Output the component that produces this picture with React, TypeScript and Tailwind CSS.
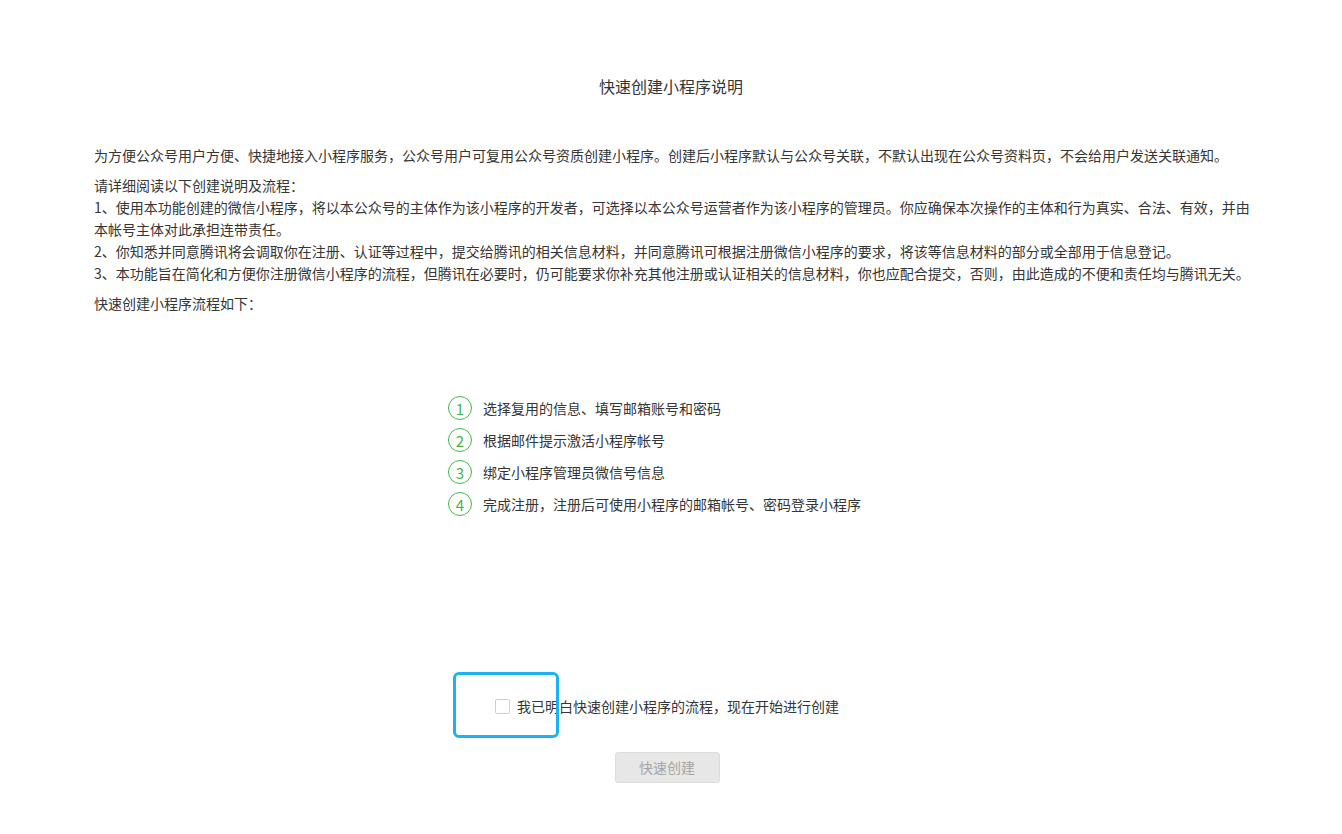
import React, { useState } from 'react';

const steps = [
  '选择复用的信息、填写邮箱账号和密码',
  '根据邮件提示激活小程序帐号',
  '绑定小程序管理员微信号信息',
  '完成注册，注册后可使用小程序的邮箱帐号、密码登录小程序',
];

const App = () => {
  const [agreed, setAgreed] = useState(false);

  return (
    <div className="min-h-screen bg-white text-[#353535] font-['Noto_Sans_CJK_SC','Noto_Sans',sans-serif]">
      <div className="pt-[74px] pb-[48px]">
        {/* Title */}
        <h2 className="text-center text-[16px] leading-[24px] font-normal">快速创建小程序说明</h2>

        {/* Intro */}
        <div className="ml-[94px] w-[1162px] mt-[46px] text-[14px] leading-[22px]">
          <p>
            为方便公众号用户方便、快捷地接入小程序服务，公众号用户可复用公众号资质创建小程序。创建后小程序默认与公众号关联，不默认出现在公众号资料页，不会给用户发送关联通知。
          </p>
          <p className="mt-[8px]">请详细阅读以下创建说明及流程：</p>
          <p>
            1、使用本功能创建的微信小程序，将以本公众号的主体作为该小程序的开发者，可选择以本公众号运营者作为该小程序的管理员。你应确保本次操作的主体和行为真实、合法、有效，并由本帐号主体对此承担连带责任。
          </p>
          <p>
            2、你知悉并同意腾讯将会调取你在注册、认证等过程中，提交给腾讯的相关信息材料，并同意腾讯可根据注册微信小程序的要求，将该等信息材料的部分或全部用于信息登记。
          </p>
          <p>
            3、本功能旨在简化和方便你注册微信小程序的流程，但腾讯在必要时，仍可能要求你补充其他注册或认证相关的信息材料，你也应配合提交，否则，由此造成的不便和责任均与腾讯无关。
          </p>
          <p className="mt-[8px]">快速创建小程序流程如下：</p>
        </div>

        {/* Steps */}
        <div className="flex justify-center mt-[82px]">
          <ol className="w-[446px] flex flex-col gap-[8px]">
            {steps.map((s, i) => (
              <li key={i} className="flex items-center h-[24px]">
                <span className="w-[24px] h-[24px] rounded-full border border-[#44b549] text-[#44b549] text-[15px] leading-none flex items-center justify-center shrink-0">
                  {i + 1}
                </span>
                <span className="ml-[11px] text-[14px] leading-[22px]">{s}</span>
              </li>
            ))}
          </ol>
        </div>

        {/* Agreement */}
        <div className="flex justify-center pr-[8px] mt-[179px]">
          <label className="relative flex items-center h-[22px] cursor-pointer">
            <input
              type="checkbox"
              checked={agreed}
              onChange={(e) => setAgreed(e.target.checked)}
              className="appearance-none w-[15px] h-[15px] border border-[#cfcfcf] rounded-[2px] bg-white checked:bg-[#44b549] checked:border-[#44b549]"
            />
            <span className="ml-[7px] text-[14px] leading-[22px]">我已明白快速创建小程序的流程，现在开始进行创建</span>
            {/* focus highlight */}
            <span className="absolute left-[-42px] top-[-23px] w-[106px] h-[66px] border-[3px] border-[#1ab3ef] rounded-[6px] pointer-events-none" />
          </label>
        </div>

        {/* Button */}
        <div className="flex justify-center pr-[8px] mt-[35px]">
          <button
            disabled={!agreed}
            className="w-[105px] h-[31px] rounded-[3px] border border-[#dcdcdc] bg-[#e7e7e7] text-[#a5a5a5] text-[14px] disabled:cursor-not-allowed"
          >
            快速创建
          </button>
        </div>
      </div>
    </div>
  );
};

export default App;
